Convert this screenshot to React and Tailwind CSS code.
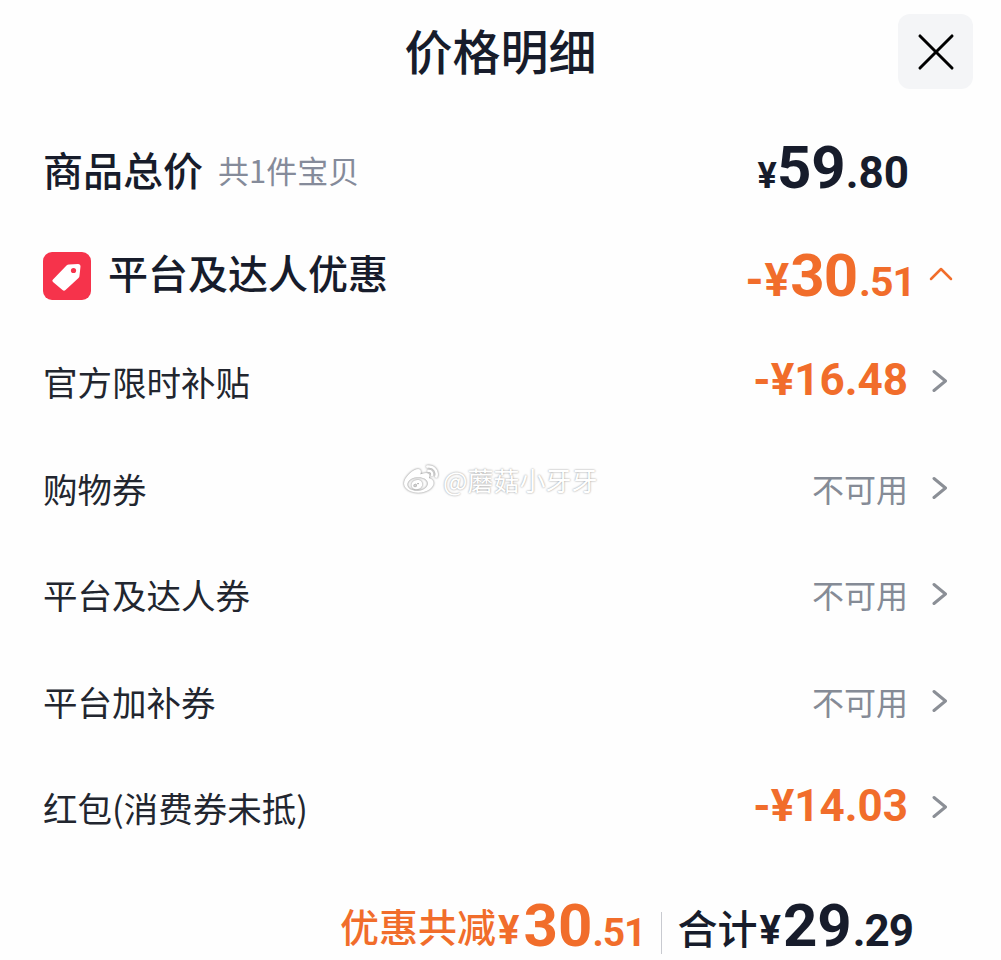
import { X } from 'lucide-react';
import { FaWeibo } from 'react-icons/fa';

const cjk = "font-['Noto_Sans_CJK_SC',sans-serif]";
const num = "font-['Roboto','Noto_Sans_CJK_SC',sans-serif]";

const rows = [
  { label: '官方限时补贴', amount: '-¥16.48' },
  { label: '购物券' },
  { label: '平台及达人券' },
  { label: '平台加补券' },
  { label: '红包(消费券未抵)', amount: '-¥14.03' },
];

function TagIcon() {
  return (
    <div className="w-[48px] h-[48px] rounded-[9px] bg-[#f6334b] flex items-center justify-center">
      <svg width="34" height="34" viewBox="0 0 34 34">
        <path
          d="M3 20.5 L16.5 6.5 Q17.5 5.5 19 5.5 L28 5 Q30.5 5 30.5 7.5 L29.5 16.5 Q29.5 18 28.5 19 L15.5 31 Q14 32.5 12.5 31 L3 23 Q1.5 21.8 3 20.5 Z"
          fill="#ffffff"
        />
        <circle cx="23.5" cy="11.5" r="2.6" fill="#f6334b" />
      </svg>
    </div>
  );
}

function Chevron() {
  return (
    <svg className="ml-[24px] shrink-0" width="16" height="24" viewBox="0 0 16 24" fill="none">
      <path d="M2 2.5 L13.5 12 L2 21.5" stroke="#8b8f96" strokeWidth="3" strokeLinecap="round" strokeLinejoin="round" />
    </svg>
  );
}

function DetailRow({ label, amount }) {
  return (
    <div className="h-[106.5px] flex items-center justify-between">
      <span className="text-[34.5px] text-[#22262f] leading-none">{label}</span>
      <div className="flex items-center">
        {amount ? (
          <span className={`${num} text-[44px] font-bold text-[#f16d2b] leading-none mb-[2px]`}>{amount}</span>
        ) : (
          <span className="text-[32px] text-[#858b96] leading-none">不可用</span>
        )}
        <Chevron />
      </div>
    </div>
  );
}

export default function App() {
  return (
    <div className={`${cjk} relative w-[1001px] h-[960px] overflow-hidden bg-[#fefefe] text-[#171c2b]`}>
      {/* Title bar */}
      <div className="relative h-[104px] flex items-center justify-center">
        <h1 className="text-[48px] font-medium leading-none mb-[6px]">价格明细</h1>
        <button className="absolute right-[28px] top-[14px] w-[75px] h-[75px] rounded-[12px] bg-[#f4f5f7] flex items-center justify-center">
          <X className="w-[64px] h-[64px] shrink-0 text-black" strokeWidth={1.15} />
        </button>
      </div>

      <div className="pl-[43px] pr-[53px]">
        {/* Total */}
        <div className="h-[136px] flex items-center justify-between">
          <div className="flex items-center gap-[15px] mb-[6px]">
            <span className="text-[40px] font-medium leading-none">商品总价</span>
            <span className="text-[31px] text-[#858b9a] leading-none">共1件宝贝</span>
          </div>
          <div className={`${num} mr-[39px] mb-[8px] flex items-baseline font-bold leading-none`}>
            <span className="text-[36px]">¥</span>
            <span className="text-[60px]">59</span>
            <span className="text-[44px]">.80</span>
          </div>
        </div>

        {/* Discount group */}
        <div className="h-[72px] flex items-center justify-between">
          <div className="flex items-center gap-[17px]">
            <TagIcon />
            <span className="text-[40px] font-medium leading-none mb-[8px]">平台及达人优惠</span>
          </div>
          <div className="flex items-center text-[#f16d2b] -mr-[5px]">
            <div className={`${num} flex items-baseline font-bold leading-none`}>
              <span className="text-[46px] tracking-[1px]">-¥</span>
              <span className="text-[60px] tracking-[-1px]">30</span>
              <span className="text-[41px] tracking-[-1px] ml-[2px]">.51</span>
            </div>
            <svg className="ml-[14px] mb-[4px]" width="24" height="14" viewBox="0 0 24 14" fill="none">
              <path d="M2 12 L12 2 L22 12" stroke="#f16d2b" strokeWidth="2.5" strokeLinecap="round" strokeLinejoin="round" />
            </svg>
          </div>
        </div>

        <div className="pt-[16px]">
          {rows.map((row) => (
            <DetailRow key={row.label} {...row} />
          ))}
        </div>

        {/* Summary */}
        <div className={`${num} mt-[41px] mr-[35px] flex items-center justify-end font-bold leading-none`}>
          <div className="flex items-baseline text-[#f16d2b]">
            <span className={`${cjk} text-[39px] font-medium leading-[48px] -translate-y-[4px]`}>优惠共减</span>
            <span className="text-[40px] leading-[48px] -translate-y-[2px] ml-[2px]">¥</span>
            <span className="text-[60px] leading-[48px] ml-[4px]">30</span>
            <span className="text-[39px] leading-[48px] tracking-[-1px]">.51</span>
          </div>
          <div className="w-px h-[42px] bg-[#c8cad0] ml-[16px] mr-[15px] mt-[8px]" />
          <div className="flex items-baseline">
            <span className={`${cjk} text-[40px] font-medium leading-[48px] -translate-y-[2px]`}>合计</span>
            <span className="text-[40px] leading-[48px] -translate-y-[2px] ml-[2px]">¥</span>
            <span className="text-[60px] leading-[48px] ml-[2px]">29</span>
            <span className="text-[44px] leading-[48px] ml-[1px] tracking-[-1px]">.29</span>
          </div>
        </div>
      </div>

      {/* Weibo handle overlay */}
      <div className="absolute left-[402px] top-[463px] flex items-center gap-[3px] text-white [text-shadow:0_0_2px_#8a8a8a]">
        <FaWeibo className="w-[38px] h-[34px] text-white [filter:drop-shadow(0_0_1px_#777)]" />
        <span className="text-[26px] leading-none">@蘑菇小牙牙</span>
      </div>
    </div>
  );
}
